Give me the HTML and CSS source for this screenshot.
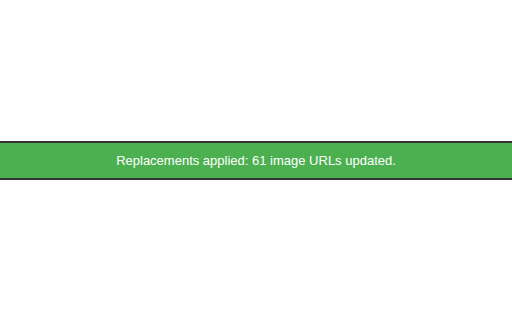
FILE: index.html
```html
<!DOCTYPE html>
<html lang="en">
<head>
    <meta charset="UTF-8">
    <meta name="viewport" content="width=device-width, initial-scale=1.0">
    <title>Replacements</title>
    <link rel="stylesheet" href="styles.css">
</head>
<body>
    <div class="notice">Replacements applied: 61 image URLs updated.</div>
</body>
</html>
```

FILE: styles.css
```css
body {
    font-family: 'Liberation Sans', Arial, sans-serif;
    display: flex;
    align-items: center;
    min-height: 100vh;
    margin: 0;
    background: #fff;
}
.notice {
    width: 100%;
    background: #4caf50;
    color: #fff;
    font-size: 13px;
    line-height: 17px;
    text-align: center;
    padding: 9px 0;
    border-top: 2px solid #333;
    border-bottom: 2px solid #333;
}
```
